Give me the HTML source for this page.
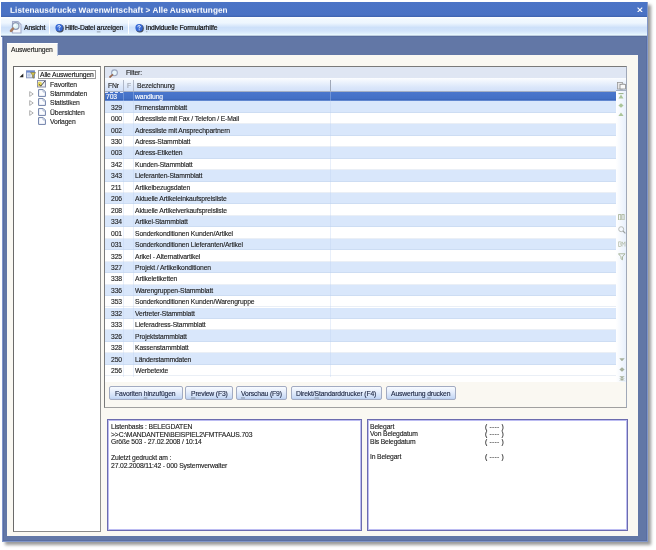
<!DOCTYPE html>
<html><head><meta charset="utf-8">
<style>
*{margin:0;padding:0;box-sizing:border-box}
html,body{width:656px;height:550px;overflow:hidden;background:#fff;position:relative;font-family:"Liberation Sans",sans-serif;font-size:6.8px;letter-spacing:-0.15px;color:#1c1c1c}
.a{position:absolute}
.t{position:absolute;white-space:nowrap;line-height:1;will-change:transform}
.t,.row span,.btn{-webkit-text-stroke:.12px currentColor}
.row span,.btn span{will-change:transform}
.t,.row span,.btn span{transform:scaleY(1.12)}
.btn span{display:inline-block}
#win{left:1.5px;top:2px;width:646px;height:539.5px;background:#6277a6;box-shadow:inset 0 0 0 1px #8096c8,inset 0 0 0 2px #5a6ea2,3px 3px 3px rgba(0,0,0,.4)}
#title{left:1px;top:2px;width:646px;height:15px;background:linear-gradient(#4b74c6 0,#4a72c4 13px,#3d62ad 15px)}
#toolbar{left:1px;top:17px;width:646px;height:20px;background:linear-gradient(#ffffff 0px,#f2f9fe 2px,#eef6fe 6px,#cde0f9 10.5px,#d2e4fa 14px,#e2f2fd 17px,#eefcff 18px,#5a6e9c 19.5px,#4c6090 20px)}
.sep{position:absolute;top:20px;width:1px;height:14px;background:#a8b4c8;border-right:1px solid #fff}
#cream{left:6.5px;top:55px;width:631.5px;height:481px;background:#faf8f2}
#tab{left:6.5px;top:43px;width:51.5px;height:12.5px;background:#faf8f2;border-top:1px solid #fff;border-right:1.5px solid #b6c4e0}
.panel{position:absolute;background:#fff}
#tree{left:13px;top:66px;width:87.5px;height:465.5px;border:1px solid #6a6a6a;border-right-color:#909090;border-bottom-color:#8a8a8a}
#list{left:104px;top:66px;width:522.5px;height:341.5px;border:1px solid #7a7a7a;border-right-color:#a0a8b8;border-bottom-color:#a0a0a0;background:#faf8f2}
#filter{left:105px;top:67px;width:520.5px;height:11px;background:#dfe6f3}
#hdr{left:105px;top:78px;width:520.5px;height:13.5px;background:linear-gradient(#fbfdff,#dbe7fa 70%,#d3e1f8);border-bottom:1px solid #a5b0c4}
#side{left:616px;top:91px;width:9.5px;height:290.5px;background:linear-gradient(90deg,#ffffff,#e8f0fc)}
#rows{left:105px;top:91.5px;width:511px;height:290px;background:#fff}
.row{position:absolute;left:0;width:511px;height:11.45px;border-bottom:1px solid rgba(170,190,220,.25)}
.row.b{background:#d9e7fb}
.row.sel{background:linear-gradient(#4a76cc,#4370c6 80%,#3b64b8);color:#fff}
.row .n{position:absolute;right:494.5px;top:3.3px;line-height:1}
.row .d{position:absolute;left:30px;top:3.3px;line-height:1}
.vl{position:absolute;top:91.5px;width:1px;height:285px;background:rgba(190,210,240,.35)}
.btn{position:absolute;top:386.3px;height:14px;border:1px solid #a2abc2;border-radius:2px;background:linear-gradient(#f8fbff,#e6eefc 40%,#cbdcf6 85%,#bcd0f2);text-align:center;line-height:13.6px;color:#1b2440}
u{text-decoration-thickness:0.5px;text-underline-offset:0.8px;text-decoration-color:rgba(0,0,0,.28)}
.info{position:absolute;top:419px;height:112px;background:#fff;border:1px solid #6c6cae;box-shadow:inset 0 0 0 1px #bcbcf2}
.info .t{left:3px}
</style></head><body>
<div class="a" id="win"></div>
<div class="a" id="title"></div>
<div class="t" style="left:10px;top:6.5px;font-weight:bold;font-size:8.2px;letter-spacing:0.08px;color:#fff;transform:scaleY(.86);-webkit-text-stroke:0">Listenausdrucke Warenwirtschaft &gt; Alle Auswertungen</div>
<svg class="a" style="left:636.8px;top:6.6px" width="5.8" height="5.8" viewBox="0 0 6 6"><path d="M0.6 0.6L5.4 5.4M5.4 0.6L0.6 5.4" stroke="#fff" stroke-width="1.15"/></svg>
<div class="a" id="toolbar"></div>
<div class="sep" style="left:48.5px"></div>
<div class="sep" style="left:128px"></div>
<div class="t" style="left:24px;top:24.8px;-webkit-text-stroke:.22px #111">Ansicht</div>
<div class="t" style="left:65.2px;top:24.8px;-webkit-text-stroke:.22px #111">Hilfe-Datei <u>a</u>nzeigen</div>
<div class="t" style="left:145.6px;top:24.8px;-webkit-text-stroke:.22px #111"><u>i</u>ndividuelle Formularhilfe</div>

<svg class="a" style="left:8px;top:20px" width="16" height="14" viewBox="0 0 16 14">
<path d="M4.5 1.5h5.5l3 3v8.5h-8.5z" fill="#f4f6fc" stroke="#a4aecb" stroke-width="1.1"/>
<circle cx="7.7" cy="6" r="3.3" fill="#dff3f6" stroke="#8e98b4" stroke-width="1.2"/>
<circle cx="7" cy="5.2" r="1.2" fill="#ffffff" opacity=".8"/>
<path d="M5 8.7L3 10.9" stroke="#a87c60" stroke-width="2.6" stroke-linecap="round"/>
</svg>
<svg class="a" style="left:53.5px;top:22.5px" width="11" height="10" viewBox="0 0 11 10">
<circle cx="5.9" cy="5.5" r="3.9" fill="#2a3040" opacity=".85"/>
<circle cx="5.1" cy="4.7" r="3.7" fill="#3467d4"/>
<circle cx="4.4" cy="3.8" r="1.8" fill="#5a8ae8" opacity=".6"/>
<path d="M3.9 3.5c0-1.2 2.4-1.2 2.4 0c0 0.9-1.1 0.9-1.1 1.9" fill="none" stroke="#fff" stroke-width=".95"/>
<rect x="4.7" y="6.3" width="1" height="1" fill="#fff"/>
</svg>
<svg class="a" style="left:133.8px;top:22.5px" width="11" height="10" viewBox="0 0 11 10">
<circle cx="5.9" cy="5.5" r="3.9" fill="#2a3040" opacity=".85"/>
<circle cx="5.1" cy="4.7" r="3.7" fill="#3467d4"/>
<circle cx="4.4" cy="3.8" r="1.8" fill="#5a8ae8" opacity=".6"/>
<path d="M3.9 3.5c0-1.2 2.4-1.2 2.4 0c0 0.9-1.1 0.9-1.1 1.9" fill="none" stroke="#fff" stroke-width=".95"/>
<rect x="4.7" y="6.3" width="1" height="1" fill="#fff"/>
</svg>
<div class="a" id="cream"></div>
<div class="a" id="tab"></div>
<div class="t" style="left:11px;top:46.5px">Auswertungen</div>

<div class="panel" id="tree"></div>

<svg class="a" style="left:19px;top:72.5px" width="5" height="5" viewBox="0 0 5 5"><path d="M4.3 0.5V4.3H0.5z" fill="#222"/></svg>
<svg class="a" style="left:26px;top:70px" width="10" height="9" viewBox="0 0 10 9">
<rect x="0.5" y="0.8" width="8" height="7" fill="#e2e8f4" stroke="#8898c0" stroke-width="1"/>
<rect x="0.5" y="0.8" width="8" height="1.8" fill="#6c8ad0"/>
<rect x="1.5" y="3.5" width="3" height="3" fill="#b8c8e4"/>
<path d="M4.6 2.6h5l-2 2.6v3l-1.1-0.8v-2.2z" fill="#d9c84a" stroke="#5c5430" stroke-width=".5"/>
</svg>
<div class="a" style="left:38.3px;top:69.8px;width:57.5px;height:9px;border:1px solid #9c9c9c"></div>
<div class="t" style="left:40.2px;top:72.2px;color:#111">Alle Auswertungen</div>
<svg class="a" style="left:37px;top:80px" width="9" height="7.5" viewBox="0 0 9 7.5">
<rect x="0.5" y="0.5" width="8" height="6.5" fill="#eceef6" stroke="#8a8ea8" stroke-width="1"/>
<ellipse cx="2.8" cy="4" rx="2.2" ry="2.6" fill="#e8d860"/>
<path d="M2.2 4.2l1.5 2l4.3-5.2" fill="none" stroke="#3a3a3a" stroke-width=".9"/>
</svg>
<div class="t" style="left:49.6px;top:81.5px">Favoriten</div>
<svg class="a" style="left:28.8px;top:90.9px" width="5" height="6" viewBox="0 0 5 6"><path d="M0.7 0.6L4.2 3L0.7 5.4z" fill="#fff" stroke="#9a9a9a" stroke-width=".8"/></svg><svg class="a" style="left:37.8px;top:89.0px" width="8" height="8" viewBox="0 0 8 8"><path d="M0.6 0.6h4.6l2.2 2.2v4.6h-6.8z" fill="#fbfcff" stroke="#6f80a8" stroke-width="1"/><path d="M5 0.6v2.4h2.4" fill="none" stroke="#9aa6c4" stroke-width=".7"/></svg><div class="t" style="left:49.6px;top:90.8px">Stammdaten</div>
<svg class="a" style="left:28.8px;top:100.3px" width="5" height="6" viewBox="0 0 5 6"><path d="M0.7 0.6L4.2 3L0.7 5.4z" fill="#fff" stroke="#9a9a9a" stroke-width=".8"/></svg><svg class="a" style="left:37.8px;top:98.4px" width="8" height="8" viewBox="0 0 8 8"><path d="M0.6 0.6h4.6l2.2 2.2v4.6h-6.8z" fill="#fbfcff" stroke="#6f80a8" stroke-width="1"/><path d="M5 0.6v2.4h2.4" fill="none" stroke="#9aa6c4" stroke-width=".7"/></svg><div class="t" style="left:49.6px;top:100.2px">Statistiken</div>
<svg class="a" style="left:28.8px;top:109.7px" width="5" height="6" viewBox="0 0 5 6"><path d="M0.7 0.6L4.2 3L0.7 5.4z" fill="#fff" stroke="#9a9a9a" stroke-width=".8"/></svg><svg class="a" style="left:37.8px;top:107.8px" width="8" height="8" viewBox="0 0 8 8"><path d="M0.6 0.6h4.6l2.2 2.2v4.6h-6.8z" fill="#fbfcff" stroke="#6f80a8" stroke-width="1"/><path d="M5 0.6v2.4h2.4" fill="none" stroke="#9aa6c4" stroke-width=".7"/></svg><div class="t" style="left:49.6px;top:109.6px">Übersichten</div>
<svg class="a" style="left:37.8px;top:117.2px" width="8" height="8" viewBox="0 0 8 8"><path d="M0.6 0.6h4.6l2.2 2.2v4.6h-6.8z" fill="#fbfcff" stroke="#6f80a8" stroke-width="1"/><path d="M5 0.6v2.4h2.4" fill="none" stroke="#9aa6c4" stroke-width=".7"/></svg><div class="t" style="left:49.6px;top:119.0px">Vorlagen</div>
<div class="panel" id="list"></div>
<div class="a" id="filter"></div>
<svg class="a" style="left:107.5px;top:67.5px" width="10" height="10" viewBox="0 0 10 10">
<circle cx="6.5" cy="4.8" r="2.9" fill="#e8f6fa" stroke="#9aa6c0" stroke-width="1.1"/>
<path d="M4.4 6.9L2 9" stroke="#9a6a50" stroke-width="1.7" stroke-linecap="round"/></svg>
<div class="t" style="left:125.5px;top:70px">Filter:</div>
<div class="a" id="hdr"></div>
<div class="a" id="side"></div>
<div class="t" style="left:107.8px;top:82.8px">FNr</div>
<div class="t" style="left:127px;top:82.8px;color:#9aa0aa">F</div>
<div class="t" style="left:136.5px;top:82.8px">Bezeichnung</div>
<div class="a" style="left:123px;top:80px;width:1px;height:11px;background:#b0b8c8"></div>
<div class="a" style="left:132.5px;top:80px;width:1px;height:11px;background:#b0b8c8"></div>
<div class="a" style="left:329.5px;top:80px;width:1px;height:11px;background:#a0a8b8"></div>
<div class="a" id="rows"></div>
<div id="rowwrap" class="a" style="left:105px;top:91.5px;width:511px;height:290px;overflow:hidden">
<div class="row sel" style="top:0px;height:9.9px"><span class="n" style="right:499px;top:2.4px">703</span><span style="position:absolute;left:0;top:0;width:18px;height:0;border-top:1px dashed #dfe8ff"></span><span class="d" style="top:2.4px">wandlung</span></div>
<div class="row b" style="top:9.9px"><span class="n">329</span><span class="d">Firmenstammblatt</span></div>
<div class="row" style="top:21.35px"><span class="n">000</span><span class="d">Adressliste mit Fax / Telefon / E-Mail</span></div>
<div class="row b" style="top:32.8px"><span class="n">002</span><span class="d">Adressliste mit Ansprechpartnern</span></div>
<div class="row" style="top:44.25px"><span class="n">330</span><span class="d">Adress-Stammblatt</span></div>
<div class="row b" style="top:55.7px"><span class="n">003</span><span class="d">Adress-Etiketten</span></div>
<div class="row" style="top:67.15px"><span class="n">342</span><span class="d">Kunden-Stammblatt</span></div>
<div class="row b" style="top:78.6px"><span class="n">343</span><span class="d">Lieferanten-Stammblatt</span></div>
<div class="row" style="top:90.05px"><span class="n">211</span><span class="d">Artikelbezugsdaten</span></div>
<div class="row b" style="top:101.5px"><span class="n">206</span><span class="d">Aktuelle Artikeleinkaufspreisliste</span></div>
<div class="row" style="top:112.95px"><span class="n">208</span><span class="d">Aktuelle Artikelverkaufspreisliste</span></div>
<div class="row b" style="top:124.4px"><span class="n">334</span><span class="d">Artikel-Stammblatt</span></div>
<div class="row" style="top:135.85px"><span class="n">001</span><span class="d">Sonderkonditionen Kunden/Artikel</span></div>
<div class="row b" style="top:147.3px"><span class="n">031</span><span class="d">Sonderkonditionen Lieferanten/Artikel</span></div>
<div class="row" style="top:158.75px"><span class="n">325</span><span class="d">Arikel - Alternativartikel</span></div>
<div class="row b" style="top:170.2px"><span class="n">327</span><span class="d">Projekt / Artikelkonditionen</span></div>
<div class="row" style="top:181.65px"><span class="n">338</span><span class="d">Artikeletiketten</span></div>
<div class="row b" style="top:193.1px"><span class="n">336</span><span class="d">Warengruppen-Stammblatt</span></div>
<div class="row" style="top:204.55px"><span class="n">353</span><span class="d">Sonderkonditionen Kunden/Warengruppe</span></div>
<div class="row b" style="top:216.0px"><span class="n">332</span><span class="d">Vertreter-Stammblatt</span></div>
<div class="row" style="top:227.45px"><span class="n">333</span><span class="d">Lieferadress-Stammblatt</span></div>
<div class="row b" style="top:238.9px"><span class="n">326</span><span class="d">Projektstammblatt</span></div>
<div class="row" style="top:250.35px"><span class="n">328</span><span class="d">Kassenstammblatt</span></div>
<div class="row b" style="top:261.8px"><span class="n">250</span><span class="d">Länderstammdaten</span></div>
<div class="row" style="top:273.25px"><span class="n">256</span><span class="d">Werbetexte</span></div>
</div>
<div class="vl" style="left:123px"></div><div class="vl" style="left:132.5px"></div><div class="vl" style="left:329.5px"></div>


<svg class="a" style="left:616.5px;top:81.5px" width="9" height="8" viewBox="0 0 9 8">
<rect x="0.5" y="0.5" width="5" height="6.5" fill="#e8e8e8" stroke="#9a9a9a" stroke-width=".8"/>
<rect x="3" y="2.5" width="5.5" height="4.5" fill="#fafafa" stroke="#8a8a8a" stroke-width=".8"/>
<rect x="4.5" y="1.5" width="3" height="1.5" fill="#b0b0b0"/></svg>
<div class="a" style="left:616px;top:90px;width:10px;height:1px;background:#a5b0c4"></div>
<svg class="a" style="left:618px;top:92.5px" width="6" height="6" viewBox="0 0 6 6"><path d="M0.5 0.6h5" stroke="#8aa878" stroke-width=".9"/><path d="M3 1.5L5.5 5.5H0.5z" fill="#abc59a"/></svg>
<svg class="a" style="left:618px;top:102.5px" width="6" height="5" viewBox="0 0 6 5"><path d="M3 0.2L5.6 2.5L3 4.8L0.4 2.5z" fill="#abc59a"/></svg>
<svg class="a" style="left:618px;top:112px" width="6" height="4.5" viewBox="0 0 6 4.5"><path d="M3 0.5L5.6 4H0.4z" fill="#abc59a"/></svg>
<svg class="a" style="left:617.8px;top:213.8px" width="7" height="6.5" viewBox="0 0 7 6.5"><rect x="0.6" y="0.6" width="2.2" height="5.4" fill="none" stroke="#a9b49a" stroke-width=".9"/><rect x="3.9" y="0.6" width="2.2" height="5.4" fill="none" stroke="#a9b49a" stroke-width=".9"/></svg>
<svg class="a" style="left:617.5px;top:226px" width="8" height="8" viewBox="0 0 8 8"><circle cx="3.2" cy="3.2" r="2.5" fill="none" stroke="#b0b4b0" stroke-width=".9"/><path d="M5 5L7.4 7.4" stroke="#9aa0a0" stroke-width="1.1"/></svg>
<svg class="a" style="left:617.5px;top:241px" width="8" height="6" viewBox="0 0 8 6"><path d="M0.6 5.5V0.8h1.8c1 0 1 2 0 2.1c1.2 0 1.2 2.6 0 2.6z M4 5.5V0.8l1.5 2.5l1.5-2.5v4.7" fill="none" stroke="#b4bca8" stroke-width=".8"/></svg>
<svg class="a" style="left:617.5px;top:253px" width="8" height="7.5" viewBox="0 0 8 7.5"><path d="M0.5 0.8h6.5l-2.5 3v3l-1.5-1v-2z" fill="none" stroke="#a4b096" stroke-width=".9"/></svg>
<svg class="a" style="left:618.5px;top:357.8px" width="6" height="3.5" viewBox="0 0 6 3.5"><path d="M0.3 0.3h5.4L3 3.3z" fill="#a6b09c"/></svg>
<svg class="a" style="left:618.5px;top:366.5px" width="6" height="5" viewBox="0 0 6 5"><path d="M3 0.2L5.6 2.5L3 4.8L0.4 2.5z" fill="#a6b09c"/></svg>
<svg class="a" style="left:618.5px;top:375.5px" width="6" height="5.5" viewBox="0 0 6 5.5"><path d="M0.3 0.3h5.4L3 2.6z M0.3 2.4h5.4L3 4.7z" fill="#a6b09c"/><path d="M0.3 5.1h5.4" stroke="#a6b09c" stroke-width=".7"/></svg>
<div class="btn" style="left:109px;width:73.5px"><span style="position:relative">Favoriten <u>h</u>inzufügen</span></div>
<div class="btn" style="left:185px;width:48px"><span style="position:relative"><u>P</u>review (F3)</span></div>
<div class="btn" style="left:235.8px;width:51.5px"><span style="position:relative"><u>V</u>orschau (F9)</span></div>
<div class="btn" style="left:290.7px;width:91.3px"><span style="position:relative">Direkt/<u>S</u>tandarddrucker (F4)</span></div>
<div class="btn" style="left:385.8px;width:70.3px"><span style="position:relative">Auswertung <u>d</u>rucken</span></div>

<div class="info" style="left:107px;width:254.5px">
<div class="t" style="top:4px">Listenbasis : BELEGDATEN</div>
<div class="t" style="top:11.7px">&gt;&gt;C:\MANDANTEN\BEISPIEL2\FMTFAAUS.703</div>
<div class="t" style="top:19.4px">Größe 503 - 27.02.2008 / 10:14</div>
<div class="t" style="top:34.8px">Zuletzt gedruckt am :</div>
<div class="t" style="top:42.5px">27.02.2008/11:42 - 000 Systemverwalter</div>
</div>
<div class="info" style="left:367px;width:260.5px">
<div class="t" style="top:3.6px;left:2.2px">Belegart</div>
<div class="t" style="top:11.3px;left:2.2px">Von Belegdatum</div>
<div class="t" style="top:19px;left:2.2px">Bis Belegdatum</div>
<div class="t" style="top:34.4px;left:2.2px">In Belegart</div>
<div class="t" style="top:3.5px;left:117.2px;letter-spacing:0.2px">( ---- )</div>
<div class="t" style="top:11.2px;left:117.2px;letter-spacing:0.2px">( ---- )</div>
<div class="t" style="top:18.9px;left:117.2px;letter-spacing:0.2px">( ---- )</div>
<div class="t" style="top:34.3px;left:117.2px;letter-spacing:0.2px">( ---- )</div>
</div>
</body></html>
